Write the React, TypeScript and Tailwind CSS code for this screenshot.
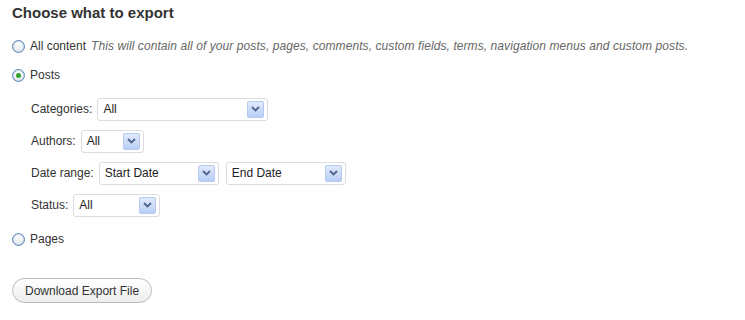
import React from 'react';

function Radio({ checked = false }: { checked?: boolean }) {
  return (
    <span className="w-[13px] h-[13px] rounded-full border border-[#5b86b8] bg-gradient-to-b from-white to-[#e4e8ee] flex items-center justify-center shrink-0 shadow-[inset_0_0_0_1px_#c9d7ea]">
      {checked && <span className="w-[5px] h-[5px] rounded-full bg-[#2ea12e]" />}
    </span>
  );
}

function Select({ value, width }: { value: string; width: string }) {
  return (
    <span className={`${width} h-[23px] bg-white border border-[#dcdcdc] rounded-[3px] flex items-center justify-between pl-[5px] pr-[3px]`}>
      <span className="text-[12px] text-[#222]">{value}</span>
      <span className="w-[17px] h-[17px] rounded-[2px] border border-[#b5c8ee] bg-gradient-to-b from-[#e2eafc] to-[#b9cdf4] flex items-center justify-center">
        <svg width="9" height="6" viewBox="0 0 9 6">
          <path d="M1 1 L4.5 4.5 L8 1" stroke="#4d6591" strokeWidth="1.8" fill="none" />
        </svg>
      </span>
    </span>
  );
}

function Row({ label, children }: { label: string; children: React.ReactNode }) {
  return (
    <div className="flex items-center gap-[5px] h-6">
      <span className="text-[12px] text-[#333]">{label}</span>
      {children}
    </div>
  );
}

export default function App() {
  return (
    <div className="w-[745px] h-[320px] bg-white pl-3 pt-1 font-['Liberation_Sans',Arial,sans-serif] text-[#333]">
      <h2 className="h-[18px] text-[15px] font-bold leading-[18px] text-[#333]">Choose what to export</h2>

      <label className="mt-[14px] h-5 flex items-center gap-[5px] text-[12px]">
        <Radio />
        <span>All content</span>
        <span className="italic text-[#666] tracking-[0.08px]">
          This will contain all of your posts, pages, comments, custom fields, terms, navigation menus and custom posts.
        </span>
      </label>

      <label className="mt-[9px] h-5 flex items-center gap-[5px] text-[12px]">
        <Radio checked />
        <span>Posts</span>
      </label>

      <div className="mt-3 pl-[19px] flex flex-col gap-2">
        <Row label="Categories:">
          <Select value="All" width="w-[171px]" />
        </Row>
        <Row label="Authors:">
          <Select value="All" width="w-[63px]" />
        </Row>
        <Row label="Date range:">
          <div className="flex gap-[7px]">
            <Select value="Start Date" width="w-[120px]" />
            <Select value="End Date" width="w-[120px]" />
          </div>
        </Row>
        <Row label="Status:">
          <Select value="All" width="w-[87px]" />
        </Row>
      </div>

      <label className="mt-3 h-5 flex items-center gap-[5px] text-[12px]">
        <Radio />
        <span>Pages</span>
      </label>

      <button className="mt-[29px] h-[25px] px-3 rounded-full border border-[#bbb] bg-gradient-to-b from-white to-[#ededed] text-[12px] text-[#333]">
        Download Export File
      </button>
    </div>
  );
}
